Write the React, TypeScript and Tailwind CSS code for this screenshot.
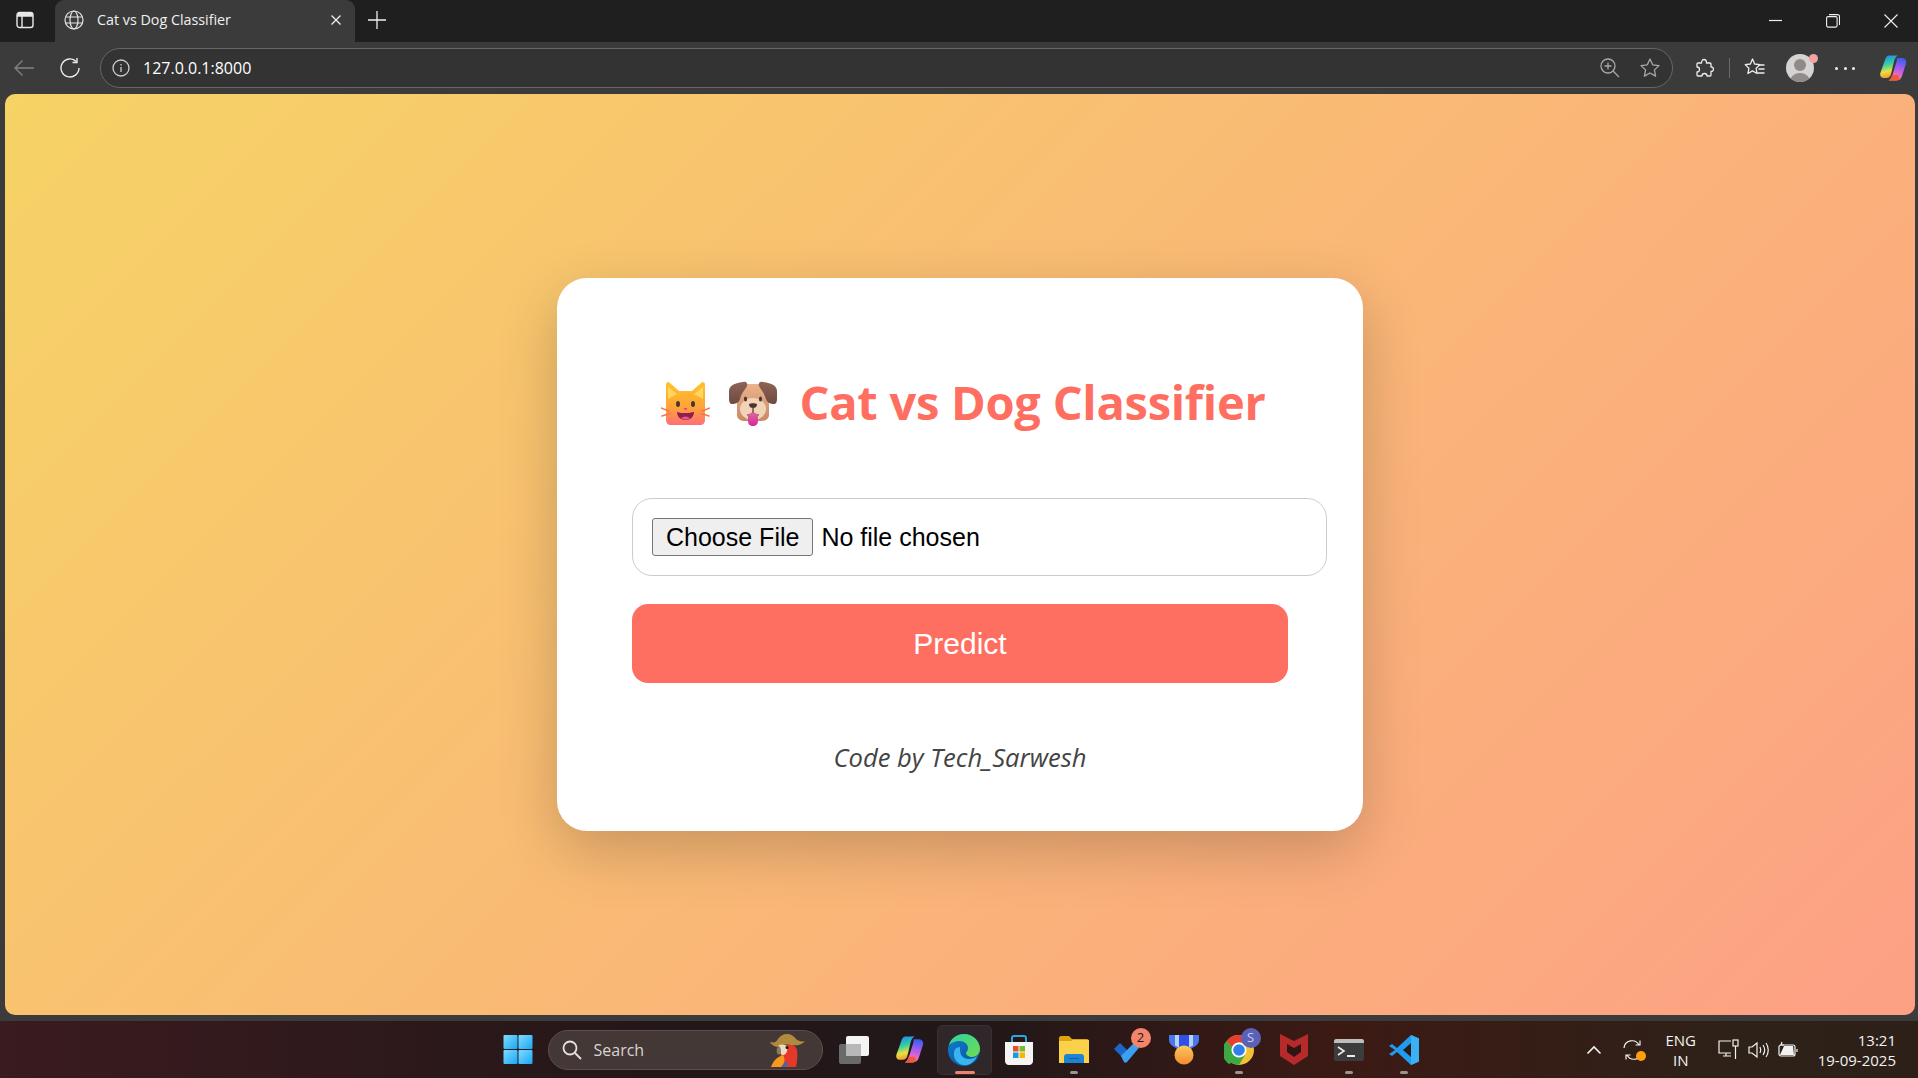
const uiFont = "font-['Open_Sans',sans-serif]";

function PanelIcon() {
  return (
    <svg width="18" height="18" viewBox="0 0 18 18" fill="none" stroke="#e8e8e8" strokeWidth="1.4">
      <rect x="1" y="1.5" width="16" height="15" rx="2.5" />
      <path d="M1 5h16M6 5v11.5" />
      <rect x="1.5" y="2" width="15" height="3" fill="#e8e8e8" stroke="none" />
    </svg>
  );
}

function GlobeIcon() {
  return (
    <svg width="20" height="20" viewBox="0 0 20 20" fill="none" stroke="#e4e4e4" strokeWidth="1.2">
      <circle cx="10" cy="10" r="9" />
      <ellipse cx="10" cy="10" rx="4" ry="9" />
      <path d="M1.6 7h16.8M1.6 13h16.8" />
    </svg>
  );
}

function CopilotIcon({ size }: { size: number }) {
  const id = `cp${size}`;
  return (
    <svg width={size} height={size} viewBox="0 0 28 28">
      <defs>
        <linearGradient id={`${id}a`} x1="0.3" y1="0" x2="0.5" y2="1">
          <stop offset="0" stopColor="#1f8cf0" />
          <stop offset="0.4" stopColor="#36d0a0" />
          <stop offset="0.7" stopColor="#e8e040" />
          <stop offset="1" stopColor="#f59030" />
        </linearGradient>
        <linearGradient id={`${id}b`} x1="0.6" y1="0" x2="0.4" y2="1">
          <stop offset="0" stopColor="#3a5cf0" />
          <stop offset="0.4" stopColor="#a05cf0" />
          <stop offset="0.75" stopColor="#e868c8" />
          <stop offset="1" stopColor="#f8906a" />
        </linearGradient>
      </defs>
      <path d="M10 1.500h9c-2 1-3 2.500-3.800 5L12 20c-.8 2.500-2 4-4.500 4H5C2 24 .5 21.500 1.500 18.500L6 6c1-3 2-4.500 4-4.500z" fill={`url(#${id}a)`} />
      <path d="M18 4h5c3 0 5 2.500 4 5.500l-4 12.500c-1 3-3 4.500-6 4.500H9.500c2-1 3-2.500 3.800-5L17.500 8C18 6 18 5 18 4z" fill={`url(#${id}b)`} />
      <path d="M9.500 26.500H17c2 0 3-1 3.500-2.500l-1.500-3H13c-.5 2.500-1.500 4.500-3.500 5.500z" fill="#ef5a3c" />
    </svg>
  );
}

function TabBar() {
  return (
    <div className="flex h-[42px] items-end bg-[#1f1f1f]">
      <div className="flex h-[42px] w-[55px] items-center pb-[2px] pl-[16px]">
        <PanelIcon />
      </div>
      <div className="flex h-[42px] w-[300px] items-center rounded-t-[9px] bg-[#3b3b3b] pb-[2px] pl-[9px] pr-[13px]">
        <GlobeIcon />
        <span className={`ml-[13px] flex-1 text-[14.3px] text-[#f0f0f0] ${uiFont}`}>Cat vs Dog Classifier</span>
        <svg width="12" height="12" viewBox="0 0 12 12" stroke="#f0f0f0" strokeWidth="1.3">
          <path d="M1.500 1.500l9 9M10.500 1.500l-9 9" />
        </svg>
      </div>
      <div className="flex h-[42px] w-[44px] items-center justify-center pb-[2px]">
        <svg width="18" height="18" viewBox="0 0 18 18" stroke="#f0f0f0" strokeWidth="1.3">
          <path d="M9 0v18M0 9h18" />
        </svg>
      </div>
      <div className="flex-1" />
      <div className="flex h-[42px] items-center">
        <div className="flex w-[58px] justify-center pl-[1px]">
          <svg width="14" height="14" viewBox="0 0 14 14" stroke="#f0f0f0" strokeWidth="1.2">
            <path d="M0 6.500h13" />
          </svg>
        </div>
        <div className="mr-[2px] flex w-[58px] justify-center">
          <svg width="14" height="14" viewBox="0 0 14 14" fill="none" stroke="#f0f0f0" strokeWidth="1.1">
            <rect x="0.600" y="2.600" width="10.500" height="10.500" rx="1.500" />
            <path d="M3 .6h8.500a2 2 0 0 1 2 2V11" />
          </svg>
        </div>
        <div className="flex w-[54px] justify-center">
          <svg width="14" height="14" viewBox="0 0 14 14" stroke="#f0f0f0" strokeWidth="1.1">
            <path d="M.5.500l13 13M13.500.500l-13 13" />
          </svg>
        </div>
      </div>
    </div>
  );
}

function Toolbar() {
  return (
    <div className="flex h-[52px] items-center bg-[#3b3b3b]">
      <div className="flex w-[47px] justify-center">
        <svg width="22" height="18" viewBox="0 0 22 18" fill="none" stroke="#848484" strokeWidth="1.300">
          <path d="M21 9H2M9.500 1.500L2 9l7.500 7.500" />
        </svg>
      </div>
      <div className="flex w-[45px] justify-center">
        <svg width="22" height="22" viewBox="0 0 22 22" fill="none" stroke="#ececec" strokeWidth="1.400">
          <path d="M17.500 4.700A9 9 0 1 0 20 11" />
          <path d="M18 1v4.500h-4.500" />
        </svg>
      </div>
      <div className="ml-[8px] flex h-[40px] w-[1573px] items-center rounded-full border border-[#666666] bg-[#333333] pl-[11px] pr-[12px]">
        <svg width="18" height="18" viewBox="0 0 18 18" fill="none" stroke="#cfcfcf" strokeWidth="1.300">
          <circle cx="9" cy="9" r="8" />
          <path d="M9 8v5M9 5v1.500" />
        </svg>
        <span className={`ml-[13px] flex-1 text-[16px] text-white ${uiFont}`}>127.0.0.1:8000</span>
        <svg width="20" height="20" viewBox="0 0 20 20" fill="none" stroke="#a8a8a8" strokeWidth="1.300">
          <circle cx="8" cy="8" r="7" />
          <path d="M13 13l6 6M8 4.500v7M4.500 8h7" />
        </svg>
        <svg className="ml-[20px]" width="20" height="20" viewBox="0 0 20 20" fill="none" stroke="#a8a8a8" strokeWidth="1.300" strokeLinejoin="round">
          <path d="M10 1l2.700 5.800 6.300.8-4.600 4.300 1.200 6.200L10 15l-5.600 3.100 1.200-6.200L1 7.600l6.300-.8z" />
        </svg>
      </div>
      <div className="ml-[21px] flex items-center">
        <svg width="20" height="20" viewBox="0 0 20 20" fill="none" stroke="#ececec" strokeWidth="1.300" strokeLinejoin="round">
          <path d="M4 5h3.500c0-2 1-3.500 2.500-3.500s2.500 1.500 2.500 3.500H16a1 1 0 0 1 1 1v3c1.500 0 2.500.8 2.500 2s-1 2.500-2.500 2.500V17a1 1 0 0 1-1 1h-3c0-1.500-1-2.500-2.500-2.500S8 16.500 8 18H4a1 1 0 0 1-1-1v-3c1.500 0 2.500-1 2.500-2.500S4.500 9 3 9V6a1 1 0 0 1 1-1z" />
        </svg>
        <div className="ml-[15px] mr-[14px] h-[20px] w-px bg-[#6a6a6a]" />
        <svg width="21" height="20" viewBox="0 0 21 20" fill="none" stroke="#ececec" strokeWidth="1.300" strokeLinejoin="round">
          <path d="M8.500 1l2.200 5 5.300.6-3.900 3.700 1 5.200-4.600-2.600-4.600 2.600 1-5.200L1.200 6.600 6.400 6z" />
          <path d="M14 7h6.500M14.500 11h6M13.500 15h7" />
        </svg>
        <div className="relative ml-[21px] h-[28px] w-[28px] overflow-hidden rounded-full bg-[#d6d4d2]">
          <div className="mx-auto mt-[5px] h-[12px] w-[12px] rounded-full bg-[#8f8b88]" />
          <div className="mx-auto mt-[2px] h-[14px] w-[22px] rounded-t-full bg-[#8f8b88]" />
        </div>
        <div className="relative -ml-[5px] -mt-[19px] h-[9px] w-[9px] rounded-full bg-[#f4a3a0]" />
        <div className="ml-[17px] flex w-[20px] justify-between">
          <div className="h-[3px] w-[3px] rounded-full bg-[#efefef]" />
          <div className="h-[3px] w-[3px] rounded-full bg-[#efefef]" />
          <div className="h-[3px] w-[3px] rounded-full bg-[#efefef]" />
        </div>
        <div className="ml-[24px]">
          <CopilotIcon size={28} />
        </div>
      </div>
    </div>
  );
}

function CatEmoji() {
  return (
    <svg width="49" height="45" viewBox="0 0 49 45">
      <defs>
        <linearGradient id="catFace" x1="0" y1="0" x2="0" y2="1">
          <stop offset="0" stopColor="#ffc32a" />
          <stop offset="0.6" stopColor="#ffa337" />
          <stop offset="1" stopColor="#ff6f78" />
        </linearGradient>
      </defs>
      <path d="M5 4c0-3 2-4 4-2l9 8h13l9-8c2-2 4-1 4 2v35c0 3-2 5-5 5H10c-3 0-5-2-5-5z" fill="url(#catFace)" />
      <path d="M7 6l9 7-9 5zM42 6l-9 7 9 5z" fill="#ffd75a" />
      <ellipse cx="17" cy="23" rx="2" ry="3" fill="#4a3340" />
      <ellipse cx="32" cy="23" rx="2" ry="3" fill="#4a3340" />
      <path d="M22.500 27h4l-2 2.500z" fill="#f0389a" />
      <path d="M16 31c3 1 5 1 8.500 1s6-.5 8.500-1c0 5-4 8-8.500 8S16 36 16 31z" fill="#8e1f4f" />
      <path d="M20 37c3-2 6-2 9 0-3 2-6 2-9 0z" fill="#f0558a" />
      <path d="M0 27l8 3M1 35l8-2.500M49 27l-8 3M48 35l-8-2.500" stroke="#f07a4c" strokeWidth="1.500" strokeLinecap="round" />
    </svg>
  );
}

function DogEmoji() {
  return (
    <svg width="48" height="45" viewBox="0 0 48 45">
      <defs>
        <linearGradient id="dogFace" x1="0" y1="0" x2="0" y2="1">
          <stop offset="0" stopColor="#eab48c" />
          <stop offset="1" stopColor="#c98866" />
        </linearGradient>
        <linearGradient id="dogEar" x1="0" y1="0" x2="0" y2="1">
          <stop offset="0" stopColor="#8d6454" />
          <stop offset="1" stopColor="#6f4a44" />
        </linearGradient>
        <linearGradient id="dogTongue" x1="0" y1="0" x2="0" y2="1">
          <stop offset="0" stopColor="#e06a96" />
          <stop offset="1" stopColor="#d3289a" />
        </linearGradient>
      </defs>
      <path d="M8 9c0-4 4-6 8-6h16c4 0 8 2 8 6v25c0 4-4 6-8 6H16c-4 0-8-2-8-6z" fill="url(#dogFace)" />
      <path d="M14 1c3-1 5 1 4 4-2 4-5 6-7 13-1 4-5 5-8 5-2 0-3-2-3-5V10C0 5 5 2 14 1z" fill="url(#dogEar)" />
      <path d="M34 1c-3-1-5 1-4 4 2 4 5 6 7 13 1 4 5 5 8 5 2 0 3-2 3-5V10c0-5-5-8-14-9z" fill="url(#dogEar)" />
      <ellipse cx="24" cy="28" rx="13" ry="11" fill="#f2d3b8" />
      <ellipse cx="16.500" cy="18" rx="1.600" ry="2.600" fill="#4a3530" />
      <ellipse cx="31.500" cy="18" rx="1.600" ry="2.600" fill="#4a3530" />
      <path d="M20 23c2-1 6-1 8 0 0 3-2 4-4 4s-4-1-4-4z" fill="#4a3530" />
      <path d="M24 27v4M18 34c2 0 5-1 6-3 1 2 4 3 6 3" stroke="#4a3530" strokeWidth="1.200" fill="none" />
      <path d="M19 33c3 0 3.500-1 5-2 1.500 1 2 2 5 2v7c0 3-2 5-5 5s-5-2-5-5z" fill="url(#dogTongue)" />
    </svg>
  );
}

function ClassifierCard() {
  return (
    <div className="w-[806px] rounded-[30px] bg-white pb-[57px] pl-[75px] pr-[75px] pt-[89px] shadow-[0_20px_60px_rgba(0,0,0,0.2)]">
      <h1 className="flex h-[72px] w-[656px] items-center justify-center pl-[7px]">
        <CatEmoji />
        <span className="ml-[19px]"><DogEmoji /></span>
        <span className="ml-[22px] whitespace-nowrap pb-[2px] font-['Open_Sans',sans-serif] text-[47px] font-bold tracking-[-0.25px] text-[#ff6f61]">
          Cat vs Dog Classifier
        </span>
      </h1>
      <form className="mt-[59px]">
        <input
          type="file"
          className="block h-[78px] w-[695px] rounded-[20px] border border-[#cccccc] bg-white py-[19px] pl-[19px] font-['Liberation_Sans',sans-serif] text-[25px] leading-[29px] text-black file:mr-[8px] file:rounded-[3px] file:border file:border-solid file:border-[#767676] file:bg-[#efefef] file:px-[13px] file:py-[3.5px] file:leading-[29px]"
        />
        <button
          type="button"
          className="mt-[28px] block h-[79px] w-[656px] rounded-[16px] bg-[#ff6f61] text-center font-['Liberation_Sans',sans-serif] text-[30px] text-white"
        >
          Predict
        </button>
      </form>
      <p className="mt-[59px] text-center font-['Open_Sans',sans-serif] text-[25.6px] italic leading-[32px] text-[#444444]">
        Code by Tech_Sarwesh
      </p>
    </div>
  );
}

function WindowsLogo() {
  return (
    <svg width="30" height="30" viewBox="0 0 30 30">
      <defs>
        <linearGradient id="winA" x1="0" y1="0" x2="1" y2="1">
          <stop offset="0" stopColor="#7fdcff" />
          <stop offset="1" stopColor="#1aa6f5" />
        </linearGradient>
      </defs>
      <rect x="0.500" y="0" width="14" height="14" rx="1" fill="url(#winA)" />
      <rect x="15.500" y="0" width="14" height="14" rx="1" fill="url(#winA)" />
      <rect x="0.500" y="15" width="14" height="14" rx="1" fill="url(#winA)" />
      <rect x="15.500" y="15" width="14" height="14" rx="1" fill="url(#winA)" />
    </svg>
  );
}

function Parrot() {
  return (
    <svg width="35" height="34" viewBox="0 0 35 34">
      <path d="M4 34c2-7 6-11 10-15l2-7c5-1 10 0 11 5 1 6 0 12-1 17z" fill="#e3382a" />
      <path d="M1 34c2-6 6-10 12-12 3 4 1 9-2 12z" fill="#f59a1e" />
      <path d="M12 34c1-3 3-5 6-5-1 2-1 4-2 5z" fill="#2c6fc0" />
      <path d="M0 9c4 1 6 .5 8-3 2-3 5-5 9-5 4 0 7 2 9 5 2 2 5 2.500 9 2.500-4 3.500-9 4.500-14 3.500-6-1-11 0-14 2-3-.5-6-2.500-7-5z" fill="#b28a3f" />
      <path d="M9 12c3-1 7-1 8 2 1 4-1 8-4 8-2 0-3-2-4-4-1-2-1-4 0-6z" fill="#ecdcc0" />
      <path d="M9 13c-2 1-3 4-2 7 1 2 3 2 4 0 0-3 0-5-2-7z" fill="#8a7a60" />
      <circle cx="17" cy="14.500" r="1.500" fill="#1d1d1d" />
    </svg>
  );
}

function TaskViewIcon() {
  return (
    <svg width="30" height="28" viewBox="0 0 30 28">
      <rect x="0" y="8" width="22" height="20" rx="2" fill="#6a6a6a" />
      <rect x="7" y="0" width="23" height="20" rx="2" fill="#f4f4f4" />
      <rect x="7" y="8" width="15" height="12" fill="#b8b8b8" />
    </svg>
  );
}

function EdgeIcon() {
  return (
    <svg width="32" height="32" viewBox="0 0 32 32">
      <defs>
        <linearGradient id="edgeA" x1="0" y1="0" x2="1" y2="1">
          <stop offset="0" stopColor="#2fd2a0" />
          <stop offset="1" stopColor="#6fdc50" />
        </linearGradient>
        <linearGradient id="edgeB" x1="0" y1="0" x2="1" y2="1">
          <stop offset="0" stopColor="#0f7fd0" />
          <stop offset="1" stopColor="#0a4f9c" />
        </linearGradient>
      </defs>
      <circle cx="16" cy="16" r="16" fill="url(#edgeB)" />
      <path d="M1 11C3 4 9 0 16 0c9 0 16 7 16 15 0 5-4 8-8 8-3 0-6-2-6-4 0-1 2-2 2-5 0-4-4-7-8-7-5 0-9 2-11 4z" fill="url(#edgeA)" />
      <path d="M12 16c0 6 4 9 9 9 3 0 6-1 8-3-2 6-8 10-14 9-6-1-10-7-9-12 0-3 2-6 6-6z" fill="#38b4ee" />
    </svg>
  );
}

function StoreIcon() {
  return (
    <svg width="30" height="30" viewBox="0 0 30 30">
      <path d="M8 7V3c0-1.500 1-2 2-2h10c1 0 2 .5 2 2v4" fill="none" stroke="#27a8e0" strokeWidth="2" />
      <path d="M1 7h28v19c0 2-1.500 4-4 4H5c-2.500 0-4-2-4-4z" fill="#f4f4f4" />
      <rect x="9" y="11" width="5.500" height="5.500" fill="#e8502a" />
      <rect x="15.500" y="11" width="5.500" height="5.500" fill="#7cb82c" />
      <rect x="9" y="17.500" width="5.500" height="5.500" fill="#1a9be0" />
      <rect x="15.500" y="17.500" width="5.500" height="5.500" fill="#f5b800" />
    </svg>
  );
}

function FolderIcon() {
  return (
    <svg width="30" height="27" viewBox="0 0 30 27">
      <path d="M0 2c0-1 1-2 2-2h8l3 3h15c1 0 2 1 2 2v3H0z" fill="#dca50e" />
      <path d="M0 5h12l2-1h16v23H0z" fill="#fbd14b" />
      <path d="M5 27v-6c0-2 1-3 3-3h14c2 0 3 1 3 3v6z" fill="#1d83d4" />
      <path d="M10 22.500h10" stroke="#0d5ca5" strokeWidth="1" />
    </svg>
  );
}

function TodoIcon() {
  return (
    <svg width="30" height="26" viewBox="0 0 30 26">
      <path d="M0 12l6-6 10 10-6 6z" fill="#1c66c9" />
      <path d="M7 19L25 1c1-1 2-1 3 0l1 2c1 1 1 2 0 3L13 25c-1 1-2 1-3 0z" fill="#3c9ff0" />
    </svg>
  );
}

function MedalIcon() {
  return (
    <svg width="30" height="30" viewBox="0 0 30 30">
      <defs>
        <linearGradient id="medalB" x1="0" y1="0" x2="0" y2="1">
          <stop offset="0" stopColor="#ffc95e" />
          <stop offset="1" stopColor="#f28a2e" />
        </linearGradient>
      </defs>
      <path d="M0 0h30v5c0 3-2 5-5 7l-4 2H9l-4-2C2 10 0 8 0 5z" fill="#4a78ec" />
      <path d="M6 0h4v12.500l-4-2zM20 0h4v10.500l-4 2z" fill="#b4d2f6" />
      <path d="M10 0h10v14H10z" fill="#2f50e6" />
      <circle cx="15" cy="20" r="9.500" fill="url(#medalB)" />
    </svg>
  );
}

function ChromeIcon() {
  return (
    <svg width="30" height="30" viewBox="0 0 30 30">
      <circle cx="15" cy="15" r="15" fill="#f1c232" />
      <path d="M15 0a15 15 0 0 1 13 7.500H15a7.500 7.500 0 0 0-7 5L2.500 6A15 15 0 0 1 15 0z" fill="#e5402f" />
      <path d="M2.500 6L8 12.500c-1 3 0 5 1 6.500l-3 10.500A15 15 0 0 1 2.500 6z" fill="#3da944" />
      <path d="M0 15a15 15 0 0 0 15 15l6-10-2 1c-5 1-8-1-10-3L3 7.500A15 15 0 0 0 0 15z" fill="#3da944" />
      <circle cx="15" cy="15" r="7.500" fill="#fff" />
      <circle cx="15" cy="15" r="5.800" fill="#2f80ed" />
    </svg>
  );
}

function McAfeeIcon() {
  return (
    <svg width="28" height="31" viewBox="0 0 28 31">
      <path d="M0 0l14 7 14-7v22L14 31 0 22z" fill="#b72a2a" />
      <path d="M7 10l7 4 7-4v8l-7 5-7-5z" fill="#301514" />
    </svg>
  );
}

function TerminalIcon() {
  return (
    <svg width="30" height="22" viewBox="0 0 30 22">
      <rect width="30" height="22" rx="2" fill="#3c3c3c" />
      <path d="M0 2c0-1 1-2 2-2h26c1 0 2 1 2 2v2H0z" fill="#bdbdbd" />
      <path d="M4 8l6 4-6 4" fill="none" stroke="#ececec" strokeWidth="1.600" />
      <path d="M13 17h8" stroke="#ececec" strokeWidth="2" />
    </svg>
  );
}

function VsCodeIcon() {
  return (
    <svg width="30" height="30" viewBox="0 0 30 30">
      <path d="M22 0l8 3.500v23L22 30 8 17l-5 4-3-2 6-4-6-4 3-2 5 4z" fill="#1f9cf0" />
      <path d="M22 0l8 3.500v23L22 30z" fill="#3ab0f5" />
      <path d="M22 8l-8 7 8 7z" fill="#2b1a18" />
    </svg>
  );
}

function Badge({ children, color, textColor }: { children: string; color: string; textColor: string }) {
  return (
    <span
      className={`absolute right-[6px] top-[3px] flex h-[20px] w-[20px] items-center justify-center rounded-full text-[13px] ${uiFont}`}
      style={{ backgroundColor: color, color: textColor }}
    >
      {children}
    </span>
  );
}

function TaskItem({ children, dot, active }: { children: React.ReactNode; dot?: boolean; active?: boolean }) {
  return (
    <div className={`relative flex h-[50px] w-[55px] items-center justify-center rounded-[5px] ${active ? "border border-[#3a3030] bg-[#2f2729]" : ""}`}>
      {children}
      {dot && <div className="absolute bottom-[1px] left-[23px] h-[3px] w-[8px] rounded-full bg-[#9c9492]" />}
      {active && <div className="absolute bottom-0 left-[17px] h-[3px] w-[20px] rounded-full bg-[#f0826e]" />}
    </div>
  );
}

function Tray() {
  return (
    <div className="flex items-center pr-[22px] text-[#f2f2f2]">
      <svg width="16" height="10" viewBox="0 0 16 10" fill="none" stroke="#f2f2f2" strokeWidth="1.600">
        <path d="M1.500 8.500L8 2l6.500 6.500" />
      </svg>
      <div className="relative ml-[20px] h-[22px] w-[22px]">
        <svg width="22" height="22" viewBox="0 0 22 22" fill="none" stroke="#f2f2f2" strokeWidth="1.200">
          <path d="M2 9a8 8 0 0 1 15-3M18 1.500V6h-4.500M20 13a8 8 0 0 1-15 3M4 20.500V16h4.500" />
        </svg>
        <div className="absolute bottom-0 right-[-2px] h-[10px] w-[10px] rounded-full bg-[#ff9f0a]" />
      </div>
      <div className={`ml-[19px] w-[36px] text-center text-[15px] leading-[20px] ${uiFont}`}>
        <div>ENG</div>
        <div>IN</div>
      </div>
      <svg className="ml-[19px]" width="21" height="21" viewBox="0 0 21 21" fill="none" stroke="#f2f2f2" strokeWidth="1.200">
        <path d="M13 2H1v12h12M5 17h8M8 14v3" />
        <rect x="15" y="1" width="5" height="6" />
        <path d="M17.500 7v13" />
      </svg>
      <svg className="ml-[9px]" width="21" height="18" viewBox="0 0 21 18" fill="none" stroke="#f2f2f2" strokeWidth="1.200">
        <path d="M1 6h3l5-4v14l-5-4H1z" />
        <path d="M12 6c1 2 1 4 0 6M15 4c2 3 2 7 0 10M18 2c3 4 3 10 0 14" />
      </svg>
      <svg className="ml-[9px]" width="20" height="18" viewBox="0 0 20 18" fill="none" stroke="#f2f2f2" strokeWidth="1.200">
        <rect x="1" y="4" width="16" height="11" rx="2" />
        <path d="M2 14L6 5h9l1 9z" fill="#f2f2f2" stroke="none" />
        <path d="M19 8v3M4 1l-1 3h3" />
      </svg>
      <div className={`ml-[20px] text-right text-[15px] leading-[20px] ${uiFont}`}>
        <div>13:21</div>
        <div>19-09-2025</div>
      </div>
    </div>
  );
}

function Taskbar() {
  return (
    <div className="flex h-[57px] items-center bg-[linear-gradient(90deg,#3a1b1f_0%,#241719_35%,#211719_50%,#3c1a14_70%,#2e2118_90%,#2c2018_100%)]">
      <div className="flex-1" />
      <div className="ml-[4px] flex items-center">
        <TaskItem><WindowsLogo /></TaskItem>
        <div className="ml-[2px] mr-[4px] flex h-[40px] w-[275px] items-center rounded-full border border-[#5a4f4e] bg-[#443836] pl-[13px] pr-[17px]">
          <svg width="20" height="20" viewBox="0 0 20 20" fill="none" stroke="#e6e2e0" strokeWidth="1.800">
            <circle cx="8" cy="8" r="6.500" />
            <path d="M13 13l6 6" />
          </svg>
          <span className={`ml-[12px] flex-1 text-[16px] text-[#d8d4d2] ${uiFont}`}>Search</span>
          <Parrot />
        </div>
        <TaskItem><TaskViewIcon /></TaskItem>
        <TaskItem><CopilotIcon size={29} /></TaskItem>
        <TaskItem active><EdgeIcon /></TaskItem>
        <TaskItem><StoreIcon /></TaskItem>
        <TaskItem dot><FolderIcon /></TaskItem>
        <TaskItem>
          <TodoIcon />
          <Badge color="#f4846a" textColor="#1a1a1a">2</Badge>
        </TaskItem>
        <TaskItem><MedalIcon /></TaskItem>
        <TaskItem dot>
          <ChromeIcon />
          <Badge color="#5a62b8" textColor="#cdd0f0">S</Badge>
        </TaskItem>
        <TaskItem><McAfeeIcon /></TaskItem>
        <TaskItem dot><TerminalIcon /></TaskItem>
        <TaskItem dot><VsCodeIcon /></TaskItem>
      </div>
      <div className="flex flex-1 justify-end">
        <Tray />
      </div>
    </div>
  );
}

export default function App() {
  return (
    <div className="flex h-[1078px] w-[1918px] flex-col overflow-hidden bg-[#3b3b3b]">
      <TabBar />
      <Toolbar />
      <div className="mb-[6px] ml-[5px] mr-[3px] flex flex-1 items-center justify-center rounded-[10px] bg-[linear-gradient(135deg,#f6d365_0%,#fda085_100%)]">
        <ClassifierCard />
      </div>
      <Taskbar />
    </div>
  );
}
